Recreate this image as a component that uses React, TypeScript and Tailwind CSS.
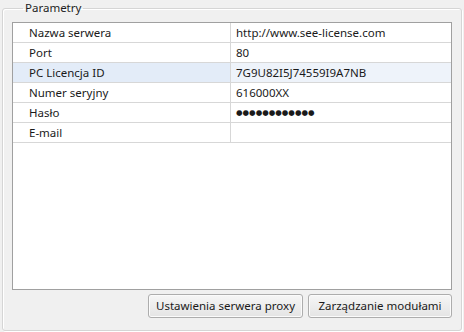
const rows = [
  { label: "Nazwa serwera", value: "http://www.see-license.com" },
  { label: "Port", value: "80" },
  { label: "PC Licencja ID", value: "7G9U82I5J74559I9A7NB", selected: true },
  { label: "Numer seryjny", value: "616000XX" },
  { label: "Hasło", value: "●●●●●●●●●●●●", password: true },
  { label: "E-mail", value: "" },
];

function WinButton({ children, className = "" }: { children: React.ReactNode; className?: string }) {
  return (
    <button
      className={`h-[24px] rounded-[3px] border border-[#adadad] bg-gradient-to-b from-[#f6f6f6] to-[#e4e4e4] text-[11.5px] text-[#1a1a1a] shadow-[inset_0_0_0_1px_#fbfbfb] ${className}`}
    >
      {children}
    </button>
  );
}

export default function App() {
  return (
    <div
      className="h-[332px] w-[464px] overflow-hidden bg-[#f0f0f0] pl-[2px] pt-[1px]"
      style={{ fontFamily: '"Noto Sans", "Open Sans", sans-serif' }}
    >
      <fieldset className="h-[330px] w-[460px] rounded-[3px] border border-[#d5d5d5] px-[9px] pb-[10px] shadow-[inset_1px_1px_0_#ffffff,1px_1px_0_#ffffff]">
        <legend className="ml-[11px] px-[2px] text-[11.5px] leading-[14px] text-[#1e1e1e]">Parametry</legend>
        <div className="mt-[7px] h-[268px] w-[440px] border border-[#a0a0a0] bg-white">
          {rows.map((r) => (
            <div
              key={r.label}
              className={`flex h-[20px] border-b border-[#d7d7d7] text-[11.5px] leading-[19px] text-[#1a1a1a] ${
                r.selected ? "bg-[#e3ecf8]" : ""
              }`}
            >
              <div className="w-[218px] shrink-0 border-r border-[#d7d7d7] pl-[16px]">{r.label}</div>
              <div
                className={`flex-1 pl-[5px] ${r.selected ? "bg-[#eef3fa]" : ""} ${
                  r.password ? "text-[7.5px]" : ""
                }`}
                style={r.password ? { fontFamily: '"DejaVu Sans", sans-serif' } : undefined}
              >
                {r.value}
              </div>
            </div>
          ))}
        </div>
        <div className="mt-[4px] flex justify-end gap-[5px]">
          <WinButton className="w-[155px]">Ustawienia serwera proxy</WinButton>
          <WinButton className="w-[144px]">Zarządzanie modułami</WinButton>
        </div>
      </fieldset>
    </div>
  );
}
